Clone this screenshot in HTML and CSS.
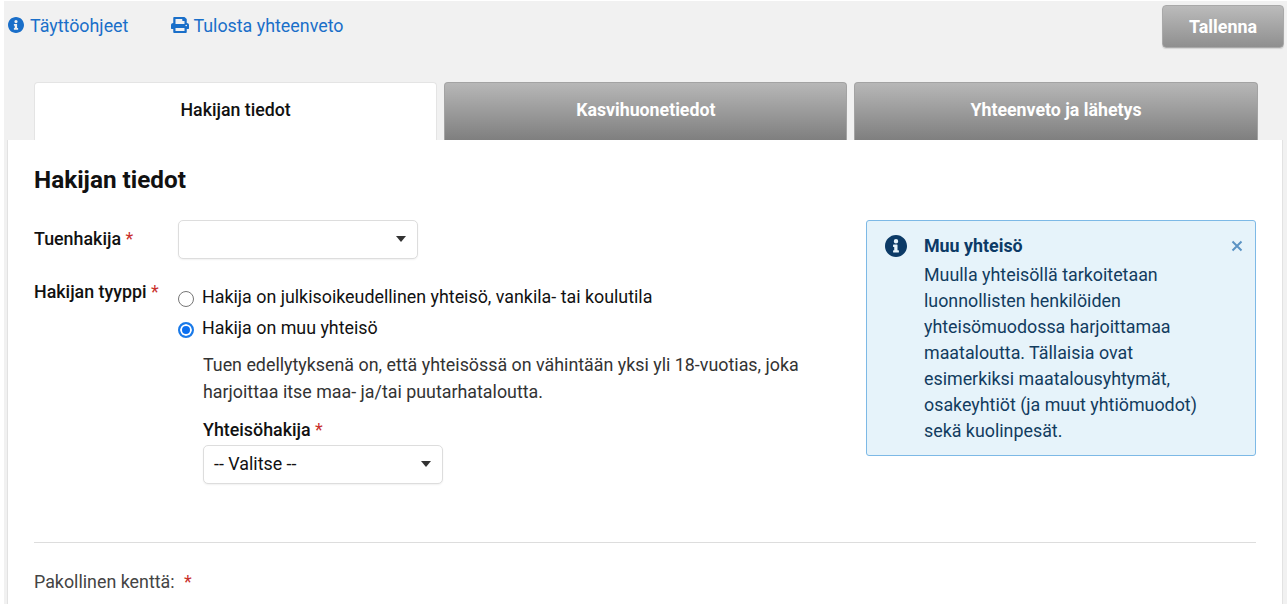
FILE: index.html
```html
<!DOCTYPE html>
<html lang="fi">
<head>
  <meta charset="UTF-8" />
  <title>Hakijan tiedot</title>
  <link rel="stylesheet" href="styles.css">
</head>
<body>
  <div class="page">
    <div class="toolbar">
      <a class="tool-link" href="#">
        <svg class="icon" width="16" height="16" viewBox="8 8 496 496"><path fill="currentColor" fill-rule="evenodd" d="M256 8C119 8 8 119 8 256s111 248 248 248 248-111 248-248S393 8 256 8zM256 100a50 50 0 1 1 0 100 50 50 0 0 1 0-100zM322 392c0 7-5 12-12 12H202c-7 0-12-5-12-12v-30c0-7 5-12 12-12h14v-72h-14c-7 0-12-5-12-12v-30c0-7 5-12 12-12h76c7 0 12 5 12 12v114h20c7 0 12 5 12 12z"/></svg>
        Täyttöohjeet
      </a>
      <a class="tool-link print-link" href="#">
        <svg class="icon" width="18" height="16" viewBox="0 0 512 512" preserveAspectRatio="none"><path fill="currentColor" d="M448 192V77a32 32 0 0 0-9-23L393 9a32 32 0 0 0-23-9H96C78 0 64 14 64 32v160c-35 0-64 29-64 64v112c0 9 7 16 16 16h48v96c0 18 14 32 32 32h320c18 0 32-14 32-32v-96h48c9 0 16-7 16-16V256c0-35-29-64-64-64zm-64 256H128v-96h256v96zm0-224H128V64h192v48c0 9 7 16 16 16h48v96zm48 72a24 24 0 1 1 0-48 24 24 0 0 1 0 48z"/></svg>
        Tulosta yhteenveto
      </a>
      <button class="save-btn">Tallenna</button>
    </div>

    <div class="tabs">
      <div class="tab active">Hakijan tiedot</div>
      <div class="tab">Kasvihuonetiedot</div>
      <div class="tab">Yhteenveto ja lähetys</div>
    </div>

    <div class="panel">
      <h1>Hakijan tiedot</h1>

      <div class="form-area">
        <div class="form-main">
          <div class="field-row applicant-row">
            <label class="field-label">Tuenhakija <span class="req">*</span></label>
            <div class="select-box"></div>
          </div>

          <div class="field-row type-row">
            <label class="field-label">Hakijan tyyppi <span class="req">*</span></label>
            <div class="type-options">
              <label class="radio-line"><input type="radio" name="tyyppi"> Hakija on julkisoikeudellinen yhteisö, vankila- tai koulutila</label>
              <label class="radio-line"><input type="radio" name="tyyppi" checked> Hakija on muu yhteisö</label>
              <div class="sub-block">
                <p class="hint">Tuen edellytyksenä on, että yhteisössä on vähintään yksi yli 18-vuotias, joka harjoittaa itse maa- ja/tai puutarhataloutta.</p>
                <label class="field-label sub-label">Yhteisöhakija <span class="req">*</span></label>
                <div class="select-box">-- Valitse --</div>
              </div>
            </div>
          </div>
        </div>

        <div class="notice">
          <svg class="notice-icon" width="22" height="22" viewBox="8 8 496 496"><path fill="currentColor" fill-rule="evenodd" d="M256 8C119 8 8 119 8 256s111 248 248 248 248-111 248-248S393 8 256 8zM256 100a50 50 0 1 1 0 100 50 50 0 0 1 0-100zM322 392c0 7-5 12-12 12H202c-7 0-12-5-12-12v-30c0-7 5-12 12-12h14v-72h-14c-7 0-12-5-12-12v-30c0-7 5-12 12-12h76c7 0 12 5 12 12v114h20c7 0 12 5 12 12z"/></svg>
          <div class="notice-body">
            <strong>Muu yhteisö</strong>
            <p>Muulla yhteisöllä tarkoitetaan luonnollisten henkilöiden yhteisömuodossa harjoittamaa maataloutta. Tällaisia ovat esimerkiksi maatalousyhtymät, osakeyhtiöt (ja muut yhtiömuodot) sekä kuolinpesät.</p>
          </div>
          <svg class="notice-close" width="12" height="12" viewBox="0 0 12 12"><path d="M1.5 1.5l9 9M10.5 1.5l-9 9" stroke="currentColor" stroke-width="2" fill="none"/></svg>
        </div>
      </div>

      <hr class="divider">
      <p class="legend">Pakollinen kenttä: <span class="req">*</span></p>
    </div>
  </div>
</body>
</html>
```

FILE: styles.css
```css
html, body {
  height: 100%;
}

body {
  margin: 0;
  padding: 1px 0 0 4px;
  box-sizing: border-box;
  overflow: hidden;
  background: #fff;
  color: #111;
  font-family: Roboto, "Liberation Sans", sans-serif;
  font-size: 17.85px;
}

.page {
  height: 603px;
  background: #f1f1f1;
  padding-left: 3px;
  overflow: hidden;
}

.toolbar {
  display: flex;
  align-items: flex-start;
  height: 81px;
  margin-left: -3px;
  padding-right: 3px;
}

.tool-link {
  display: flex;
  align-items: center;
  gap: 6px;
  margin: 13px 0 0 4px;
  height: 22px;
  color: #1a6fc9;
  text-decoration: none;
}

.print-link {
  margin-left: 43px;
  gap: 4px;
}

.save-btn {
  width: 122px;
  height: 43px;
  margin: 4px 0 0 auto;
  border: 1px solid #a9a9a9;
  border-radius: 4px;
  background: linear-gradient(#bbb, #8f8f8f);
  color: #fff;
  font: 700 17.85px Roboto, sans-serif;
  box-shadow: 0 1px 1px rgba(0, 0, 0, 0.12);
}

.tabs {
  display: flex;
  gap: 7px;
  margin-left: 27px;
  width: 1223.6px;
  height: 58px;
}

.tab {
  flex: 1;
  display: flex;
  align-items: center;
  justify-content: center;
  padding-bottom: 4px;
  box-sizing: border-box;
  border: 1px solid #a3a3a3;
  border-bottom: none;
  border-radius: 4px 4px 0 0;
  background: linear-gradient(#b7b7b7, #7f7f7f);
  color: #fff;
  font-size: 17.75px;
  font-weight: 700;
}

.tab.active {
  border-color: #e4e4e4;
  background: #fff;
  color: #111;
  font-weight: 500;
}

.panel {
  width: 1276px;
  height: 470px;
  box-sizing: border-box;
  padding: 26px 26px 0;
  background: #fff;
  border: 1px solid #e2e2e2;
  border-bottom: none;
  border-top: none;
}

h1 {
  margin: 0 0 25px;
  font-size: 24.3px;
  line-height: 28px;
  font-weight: 700;
}

.form-area {
  display: flex;
  justify-content: space-between;
  height: 323px;
}

.form-main {
  width: 790px;
}

.field-row {
  display: flex;
}

.field-label {
  width: 144px;
  flex-shrink: 0;
  font-weight: 500;
}

.req {
  color: #c9302c;
  font-weight: 400;
}

.applicant-row {
  align-items: center;
  height: 40px;
}

.applicant-row .field-label {
  padding-bottom: 2px;
}

.select-box {
  position: relative;
  width: 240px;
  height: 39px;
  box-sizing: border-box;
  padding: 0 10px;
  line-height: 36px;
  background: #fff;
  border: 1px solid #ddd;
  border-radius: 5px;
  box-shadow: 0 1px 2px rgba(0, 0, 0, 0.06);
}

.select-box::after {
  content: "";
  position: absolute;
  right: 11px;
  top: 15px;
  border-left: 5.5px solid transparent;
  border-right: 5.5px solid transparent;
  border-top: 6px solid #333;
}

.type-row {
  margin-top: 22px;
}

.type-row .field-label {
  line-height: 21px;
}

.radio-line {
  display: flex;
  align-items: center;
  gap: 8px;
  height: 31px;
  white-space: nowrap;
}

.radio-line input {
  appearance: none;
  width: 16px;
  height: 16px;
  margin: 4px 0 0;
  border: 1px solid #767676;
  border-radius: 50%;
  background: #fff;
}

.radio-line input:checked {
  border: 2px solid #1a7ae8;
  box-shadow: inset 0 0 0 2px #fff;
  background: #0b6ff0;
}

.sub-block {
  padding: 8px 0 0 25px;
}

.hint {
  margin: 0 0 14px;
  width: 610px;
  color: #333;
  line-height: 27px;
}

.sub-label {
  display: block;
  width: auto;
  line-height: 21px;
  margin-bottom: 5px;
}

.notice {
  display: flex;
  position: relative;
  width: 390px;
  height: 236px;
  margin-top: 1px;
  box-sizing: border-box;
  padding: 14px 12px 0 18px;
  background: #e6f3fa;
  border: 1px solid #7db9e6;
  border-radius: 3px;
  color: #123c5f;
}

.notice-icon {
  flex-shrink: 0;
  color: #0c3a66;
}

.notice-body {
  margin-left: 17px;
  width: 290px;
}

.notice-body strong {
  display: block;
  line-height: 22px;
  color: #0c3a66;
}

.notice-body p {
  margin: 5px 0 0;
  line-height: 26px;
}

.notice-close {
  position: absolute;
  top: 19px;
  right: 12px;
  color: #5b93c4;
}

.divider {
  margin: 0;
  border: none;
  border-top: 1px solid #ddd;
}

.legend {
  margin: 28px 0 0;
  color: #444;
  line-height: 21px;
}

.legend .req {
  margin-left: 5px;
}
```
